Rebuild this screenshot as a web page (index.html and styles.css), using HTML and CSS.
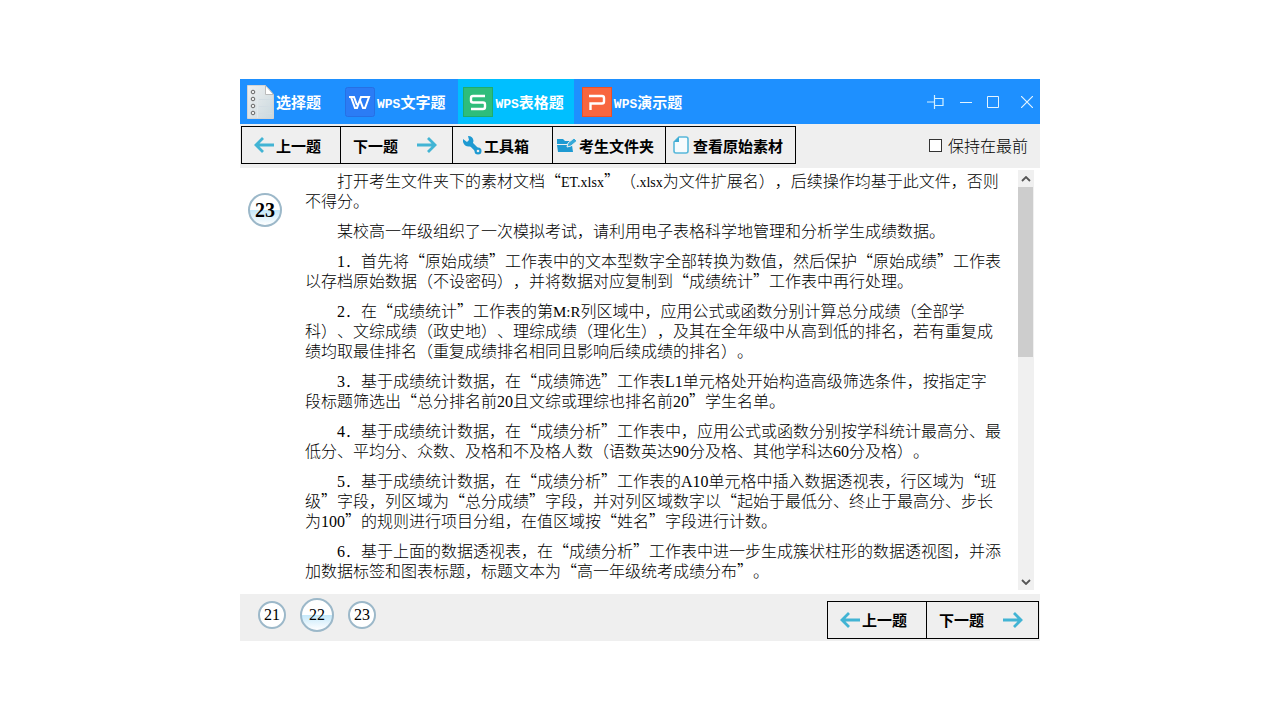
FILE: index.html
```html
<!DOCTYPE html>
<html lang="zh-CN">
<head>
  <meta charset="UTF-8">
  <meta name="viewport" content="width=device-width, initial-scale=1.0">
  <title>WPS表格题</title>
  <link rel="stylesheet" href="styles.css">
</head>
<body>

  <svg class="defs" width="0" height="0" aria-hidden="true">
    <symbol id="arrow-left" viewBox="0 0 22 16">
      <path d="M20 8H2M9 1L2 8l7 7" fill="none" stroke="#42b4d4" stroke-width="2.8"/>
    </symbol>
    <symbol id="arrow-right" viewBox="0 0 22 16">
      <path d="M1 8h18M12 1l7 7-7 7" fill="none" stroke="#42b4d4" stroke-width="2.8"/>
    </symbol>
  </svg>

  <div class="window">
    <!-- Title bar -->
    <header class="titlebar">
      <nav class="tabs">
        <button class="tab" type="button">
          <svg width="27" height="34" viewBox="0 0 27 34">
            <defs>
              <linearGradient id="paper" x1="0" y1="0" x2="1" y2="1">
                <stop offset="0" stop-color="#f0f0f0"/>
                <stop offset="1" stop-color="#c9d8de"/>
              </linearGradient>
            </defs>
            <path d="M.5.5h18l8 9v24H.5z" fill="url(#paper)" stroke="#d4d4d4"/>
            <path d="M18.500.5v9h8z" fill="#fff" stroke="#bbb"/>
            <path d="M10.500 10v23" stroke="#e2e8eb"/>
            <path d="M12 14.500h13M12 21.500h13M12 28.500h13" stroke="#d3dde3"/>
            <g fill="#eee" stroke="#666">
              <circle cx="6" cy="7" r="1.800"/><circle cx="6" cy="14" r="1.800"/>
              <circle cx="6" cy="21" r="1.800"/><circle cx="6" cy="28" r="1.800"/>
            </g>
          </svg>
          <span>选择题</span>
        </button>
        <button class="tab" type="button">
          <svg width="30" height="30" viewBox="0 0 30 30">
            <rect x=".5" y=".5" width="29" height="29" rx="2" fill="#2b7cf5" stroke="#2670e4"/>
            <path d="M4 10h5l3 8M6 10l4 11h2l4-11h8l-4 11h-2l-3-8" fill="none" stroke="#fff" stroke-width="2"/>
          </svg>
          <span><span class="en">WPS</span>文字题</span>
        </button>
        <button class="tab active" type="button">
          <svg width="30" height="30" viewBox="0 0 30 30">
            <rect x=".5" y=".5" width="29" height="29" fill="#2ebd7b" stroke="#20ad6b"/>
            <path d="M22 9H10q-2 0-2 2v2.500q0 2 2 2h10q2 0 2 2V20q0 2-2 2H8" fill="none" stroke="#fff" stroke-width="2.400"/>
          </svg>
          <span><span class="en">WPS</span>表格题</span>
        </button>
        <button class="tab last" type="button">
          <svg width="30" height="30" viewBox="0 0 30 30">
            <rect x=".5" y=".5" width="29" height="29" fill="#f8663f" stroke="#ee5027"/>
            <path d="M7 9h13q2 0 2 2v3.500q0 2-2 2H8.500V23" fill="none" stroke="#fff" stroke-width="2.400"/>
          </svg>
          <span><span class="en">WPS</span>演示题</span>
        </button>
      </nav>
      <div class="window-buttons">
        <button type="button" aria-label="固定">
          <svg width="18" height="16" viewBox="0 0 18 16"><path d="M0 8h7M7.500 1v14M8 4.500h8v7H8" fill="none" stroke="#d5f0ff" stroke-width="1.200"/></svg>
        </button>
        <button type="button" aria-label="最小化">
          <svg width="12" height="14" viewBox="0 0 12 14"><path d="M0 7.500h12" stroke="#e4f4ff"/></svg>
        </button>
        <button type="button" aria-label="最大化">
          <svg width="12" height="12" viewBox="0 0 12 12"><path d="M.5.5h11v11H.5z" fill="none" stroke="#e4f4ff"/></svg>
        </button>
        <button class="close" type="button" aria-label="关闭">
          <svg width="12" height="12" viewBox="0 0 12 12"><path d="M0 0l12 12M12 0L0 12" stroke="#e4f4ff" stroke-width="1.200"/></svg>
        </button>
      </div>
    </header>

    <!-- Toolbar -->
    <div class="toolbar">
      <div class="group">
        <button class="prev" type="button"><svg width="22" height="16"><use href="#arrow-left"/></svg>上一题</button>
        <button class="next" type="button">下一题<svg width="22" height="16"><use href="#arrow-right"/></svg></button>
        <button class="tool tools" type="button">
          <svg width="20" height="20" viewBox="0 0 20 20">
            <path d="M7 7l9 9" stroke="#1e9ad2" stroke-width="4.500"/>
            <path d="M6 1q5 0 5.500 5L10 11q-7 2-9-4V4l4 3 2-2z" fill="#1e9ad2"/>
            <circle cx="16" cy="16" r="3.500" fill="#1e9ad2"/><circle cx="16" cy="16" r="1.300" fill="#efefef"/>
          </svg>工具箱
        </button>
        <button class="tool folder" type="button">
          <svg width="20" height="16" viewBox="0 0 20 16">
            <path d="M0 2h6l2 2h8v3H0zM0 8h15l1 7H1z" fill="#1e9ad2"/>
            <path d="M10 10l1-4 6-5 3 3-6 5z" fill="#35a9d8" stroke="#efefef"/>
          </svg>考生文件夹
        </button>
        <button class="tool source" type="button">
          <svg width="16" height="18" viewBox="0 0 16 18">
            <path d="M6 1h7q2 0 2 2v12q0 2-2 2H3q-2 0-2-2V6z" fill="#f6fbfd" stroke="#58b8da" stroke-width="1.600"/>
            <path d="M6 1v5H1z" fill="#3daad2"/>
          </svg>查看原始素材
        </button>
      </div>
      <label class="on-top" for="onTop"><input type="checkbox" id="onTop">保持在最前</label>
    </div>

    <!-- Question -->
    <main class="content">
      <div class="side"><span class="badge big filled">23</span></div>
      <article class="question">
        <p>打开考生文件夹下的素材文档“<span class="latin file">ET.xlsx</span>”（<span class="latin file">.xlsx</span>为文件扩展名），后续操作均基于此文件，否则不得分。</p>
        <p>某校高一年级组织了一次模拟考试，请利用电子表格科学地管理和分析学生成绩数据。</p>
        <p><span class="latin">1</span>．首先将“原始成绩”工作表中的文本型数字全部转换为数值，然后保护“原始成绩”工作表以存档原始数据（不设密码），并将数据对应复制到“成绩统计”工作表中再行处理。</p>
        <p><span class="latin">2</span>．在“成绩统计”工作表的第<span class="latin cell">M:R</span>列区域中，应用公式或函数分别计算总分成绩（全部学科）、文综成绩（政史地）、理综成绩（理化生），及其在全年级中从高到低的排名，若有重复成绩均取最佳排名（重复成绩排名相同且影响后续成绩的排名）。</p>
        <p><span class="latin">3</span>．基于成绩统计数据，在“成绩筛选”工作表<span class="latin">L1</span>单元格处开始构造高级筛选条件，按指定字段标题筛选出“总分排名前<span class="latin">20</span>且文综或理综也排名前<span class="latin">20</span>”学生名单。</p>
        <p><span class="latin">4</span>．基于成绩统计数据，在“成绩分析”工作表中，应用公式或函数分别按学科统计最高分、最低分、平均分、众数、及格和不及格人数（语数英达<span class="latin">90</span>分及格、其他学科达<span class="latin">60</span>分及格）。</p>
        <p><span class="latin">5</span>．基于成绩统计数据，在“成绩分析”工作表的<span class="latin">A10</span>单元格中插入数据透视表，行区域为“班级”字段，列区域为“总分成绩”字段，并对列区域数字以“起始于最低分、终止于最高分、步长为<span class="latin">100</span>”的规则进行项目分组，在值区域按“姓名”字段进行计数。</p>
        <p><span class="latin">6</span>．基于上面的数据透视表，在“成绩分析”工作表中进一步生成簇状柱形的数据透视图，并添加数据标签和图表标题，标题文本为“高一年级统考成绩分布”。</p>
      </article>
      <div class="scrollbar">
        <button type="button" aria-label="向上"><svg width="10" height="6" viewBox="0 0 10 6"><path d="M1 5l4-4 4 4" fill="none" stroke="#555" stroke-width="1.800"/></svg></button>
        <div class="track"><div class="thumb"></div></div>
        <button type="button" aria-label="向下"><svg width="10" height="6" viewBox="0 0 10 6"><path d="M1 1l4 4 4-4" fill="none" stroke="#555" stroke-width="1.800"/></svg></button>
      </div>
    </main>

    <!-- Question numbers -->
    <footer class="footer">
      <div class="numbers">
        <button class="badge" type="button">21</button>
        <button class="badge big filled" type="button">22</button>
        <button class="badge" type="button">23</button>
      </div>
      <div class="group">
        <button class="prev" type="button"><svg width="22" height="16"><use href="#arrow-left"/></svg>上一题</button>
        <button class="next" type="button">下一题<svg width="22" height="16"><use href="#arrow-right"/></svg></button>
      </div>
    </footer>
  </div>

</body>
</html>
```
FILE: styles.css
```css
* {
  box-sizing: border-box;
}
body {
  margin: 0;
  min-height: 100vh;
  display: flex;
  align-items: center;
  justify-content: center;
  background: #fff;
  color: #000;
  font-family: "Noto Sans CJK SC", sans-serif;
  font-size: 16px;
  font-weight: 300;
  text-spacing-trim: space-all;
}
button {
  padding: 0;
  border: 0;
  background: none;
  color: inherit;
  font: inherit;
}
svg {
  flex: none;
}
.defs {
  position: absolute;
}
.window {
  width: 100%;
  max-width: 800px;
}

/* title bar */
.titlebar {
  display: flex;
  justify-content: space-between;
  background: #1e90ff;
  color: #fff;
}
.tabs {
  display: flex;
}
.tab {
  display: flex;
  align-items: center;
  gap: 2px;
  height: 45px;
  padding: 0 10px 0 5px;
  font-size: 15px;
  font-weight: bold;
  line-height: 20px;
  white-space: nowrap;
}
.tab:first-child {
  padding: 0 19px 0 7px;
}
.tab:nth-child(2) {
  padding-right: 13px;
}
.tab.last {
  padding-left: 8px;
}
.tab.active {
  background: #00bfff;
}
.en {
  font-family: "Liberation Mono", monospace;
  font-size: 13px;
  line-height: 1;
}
.window-buttons {
  display: flex;
  align-items: center;
  gap: 15px;
  padding-right: 7px;
}
.window-buttons button {
  display: flex;
}
.window-buttons .close {
  margin-left: 7px;
}

/* toolbar */
.toolbar {
  display: flex;
  justify-content: space-between;
  align-items: center;
  height: 44px;
  padding: 0 12px 2px 1px;
  background: #efefef;
}
.group {
  display: flex;
  border: 1px solid #000;
}
.group button {
  display: flex;
  align-items: center;
  height: 36px;
  font-size: 15px;
  font-weight: bold;
  white-space: nowrap;
}
.group button + button {
  border-left: 1px solid #000;
}
.group .prev {
  width: 98px;
  padding-left: 12px;
}
.group .next {
  width: 112px;
  gap: 18px;
  padding-left: 12px;
}
.group .tool {
  gap: 2px;
  padding: 0 11px 0 4px;
}
.group .tools {
  width: 100px;
  padding-left: 9px;
}
.group .source {
  gap: 4px;
  padding: 0 12px 0 7px;
}
.on-top {
  display: flex;
  align-items: center;
  gap: 6px;
}
.on-top input {
  appearance: none;
  width: 13px;
  height: 13px;
  margin: 0;
  border: 1px solid #333;
  background: #fff;
}

/* question */
.content {
  display: flex;
  padding: 2px 6px 4px 8px;
}
.side {
  width: 57px;
  padding-top: 23px;
}
.side .badge {
  font-size: 20px;
  font-weight: bold;
}
.question {
  flex: 1;
  padding-right: 17px;
  line-height: 20px;
}
.question p {
  margin: 0 0 10px;
  text-indent: 2em;
}
.latin {
  font-family: "Liberation Serif", serif;
  font-weight: normal;
  line-height: 1;
}
.latin.file {
  font-size: 14px;
}
.latin.cell {
  font-size: 15px;
}
.scrollbar {
  display: flex;
  flex-direction: column;
  width: 16px;
  background: #f0f0f0;
}
.scrollbar button {
  display: flex;
  align-items: center;
  justify-content: center;
  height: 17px;
}
.track {
  flex: 1;
}
.thumb {
  width: 15px;
  height: 44%;
  background: #cdcdcd;
}

/* numbers */
.badge {
  display: flex;
  align-items: center;
  justify-content: center;
  width: 28px;
  height: 28px;
  border: 2px solid #9cb8c9;
  border-radius: 50%;
  background: #fff;
  font-family: "Liberation Serif", serif;
  font-size: 16px;
}
.badge.big {
  width: 34px;
  height: 34px;
}
.badge.filled {
  background: linear-gradient(#fff 50%, #c4e8fa 50%, #fff);
}
.footer {
  display: flex;
  justify-content: space-between;
  align-items: center;
  height: 47px;
  padding: 0 1px 0 18px;
  background: #efefef;
}
.numbers {
  display: flex;
  align-items: center;
  gap: 14px;
  padding-bottom: 5px;
}
.footer .group {
  margin-top: 4px;
}
```
